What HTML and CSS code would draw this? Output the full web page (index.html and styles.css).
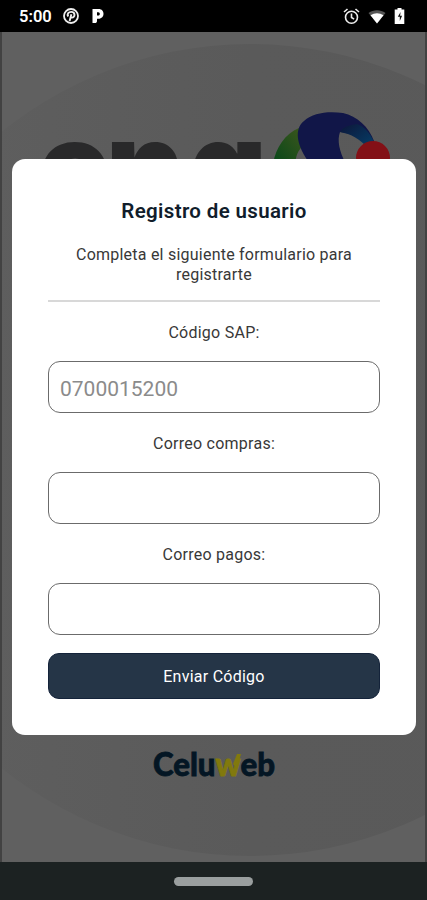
FILE: index.html
```html
<!DOCTYPE html>
<html lang="es">
	<head>
		<meta charset="UTF-8" />
		<meta name="viewport" content="width=device-width, initial-scale=1.0" />
		<title>Registro de usuario</title>
		<link rel="stylesheet" href="styles.css">
	</head>
	<body>
		<header class="status">
			<div class="status-group">
				<span class="clock">5:00</span>
				<svg class="pin" width="16" height="16" viewBox="0 0 16 16">
					<circle cx="8" cy="8" r="7" fill="none" stroke="#eee" stroke-width="1.8" />
					<path d="M5.200 8.500C3.800 5.800 5.600 3.900 8.200 3.900c4.400 0 4.100 5.700.7 5.700-.8 0-1.200-.5-1.300-.9M8.400 6.200 6.600 13" fill="none" stroke="#eee" stroke-width="1.900" />
				</svg>
				<svg width="12" height="16" viewBox="0 0 12 16">
					<path fill="#fff" fill-rule="evenodd" d="M1 1h5.500C10 1 11.500 3.200 11.500 5.800S9.800 10.800 6.500 10.800H5V13c0 1.500-1 2-2 2H.5V1zM5 4.200v3.400h1.300c2 0 2-3.400 0-3.400z" />
				</svg>
			</div>
			<div class="status-group right">
				<svg width="17" height="17" viewBox="0 0 17 17" fill="none" stroke="#eee" stroke-width="1.600">
					<circle cx="8.500" cy="9.200" r="6" />
					<path d="M8.500 5.500v4l2.600 1.700M1 4l3.500-3M16 4l-3.500-3" />
				</svg>
				<svg width="18" height="15" viewBox="0 0 18 15">
					<path d="M.5 4C5.500.2 12.500.2 17.500 4L9 14.500z" fill="#555" />
					<path d="M2.500 6.300c4-2.700 9-2.700 13 0L9 14.500z" fill="#fff" />
				</svg>
				<svg width="11" height="16" viewBox="0 0 11 16">
					<path d="M3.500 0h4v1.500h2.800V16H.7V1.500h2.800z" fill="#fff" />
					<path d="M6.600 4 3.800 8.800h2V13l2.300-5.200h-2z" fill="#111" />
				</svg>
			</div>
		</header>

		<main class="screen">
			<!-- Dimmed login screen behind the dialog -->
			<svg class="backdrop" width="427" height="830" viewBox="0 32 427 830">
				<defs>
					<linearGradient id="shade" x1="0" y1="0" x2="1" y2="0">
						<stop offset="0" stop-color="#606060" />
						<stop offset="0.5" stop-color="#5a5a5a" />
						<stop offset="1" stop-color="#595959" />
					</linearGradient>
					<linearGradient id="green" x1="0" y1="1" x2="1" y2="0">
						<stop offset="0" stop-color="#064719" />
						<stop offset="1" stop-color="#3d571d" />
					</linearGradient>
					<linearGradient id="blue" x1="0" y1="0" x2="1" y2="1">
						<stop offset="0" stop-color="#0d1638" />
						<stop offset="1" stop-color="#05406a" />
					</linearGradient>
				</defs>
				<rect y="32" width="427" height="830" fill="#606060" />
				<ellipse cx="250" cy="450" rx="400" ry="406" fill="url(#shade)" />
				<text class="brand" y="208">
					<tspan x="38">e</tspan><tspan x="106">n</tspan><tspan x="189">g</tspan>
				</text>
				<path d="M273 164c3-17 12-30 26-36l4 18c-5 4-7 10-8 18z" fill="url(#green)" />
				<path d="M310 164c-14-19-16-35-6-43 9-8 23-10 39-8 14 3 26 14 31 28l-5 6c-9-9-18-14-29-15-3 8-1 19 6 32z" fill="#111648" />
				<path d="M340 132c3-5 9-7 17-8 8 3 13 9 17 18l-5 7c-9-10-18-15-29-17z" fill="url(#blue)" />
				<circle cx="373" cy="158" r="17" fill="#831016" />
				<text class="celuweb" x="153" y="776" textLength="122" lengthAdjust="spacingAndGlyphs">Celu<tspan class="w">w</tspan>eb</text>
				<path d="M233 764l4-10h4l-4 15z" fill="#81790d" />
				<path d="M1 32v830M426 32v830" stroke="#424242" stroke-width="2" />
			</svg>

			<form class="dialog">
				<h1>Registro de usuario</h1>
				<p class="intro">Completa el siguiente formulario para registrarte</p>
				<hr />
				<label for="sap">Código SAP:</label>
				<input id="sap" type="text" placeholder="0700015200" />
				<label for="compras">Correo compras:</label>
				<input id="compras" type="text" />
				<label for="pagos">Correo pagos:</label>
				<input id="pagos" type="text" />
				<button type="button">Enviar Código</button>
			</form>
		</main>

		<footer class="nav">
			<div class="handle"></div>
		</footer>
	</body>
</html>
```
FILE: styles.css
```css
* {
	box-sizing: border-box;
}

body {
	display: flex;
	flex-direction: column;
	height: 900px;
	margin: 0;
	background: #000;
	font-family: Roboto, sans-serif;
	overflow: hidden;
}

.status {
	display: flex;
	justify-content: space-between;
	height: 32px;
	padding: 0 22px 0 19px;
	color: #fff;
}

.status-group {
	display: flex;
	align-items: center;
	gap: 13px;
}

.status-group.right {
	gap: 8px;
}

.clock {
	width: 32px;
	font-size: 16.5px;
	font-weight: 600;
	padding-top: 1px;
}

.pin {
	margin-left: -1px;
}

.screen {
	position: relative;
	height: 830px;
	padding: 127px 11px 0 12px;
}

.backdrop {
	position: absolute;
	top: 0;
	left: 0;
}

.brand {
	fill: #29292a;
	font-family: Inter, sans-serif;
	font-size: 120px;
	font-weight: 900;
}

.celuweb {
	fill: #041624;
	stroke: #041624;
	stroke-width: 0.8px;
	font-family: Lato, sans-serif;
	font-size: 32px;
	font-weight: 900;
}

.celuweb .w {
	fill: #81790d;
	stroke: #81790d;
}

.dialog {
	position: relative;
	display: flex;
	flex-direction: column;
	height: 576px;
	padding: 38px 36px 36px;
	background: #fff;
	border-radius: 13px;
	color: #383838;
	text-align: center;
}

h1 {
	margin: 0;
	color: #111d2b;
	font-size: 20.5px;
	font-weight: 600;
	letter-spacing: 0.35px;
	line-height: 28px;
}

.intro {
	margin: 20px 0 16px;
	font-size: 16px;
	letter-spacing: 0.23px;
	line-height: 19.5px;
}

hr {
	width: 100%;
	height: 2px;
	margin: 0 0 21px;
	background: #d8d8d8;
	border: none;
}

label {
	height: 20px;
	font-size: 16px;
	letter-spacing: 0.25px;
	line-height: 20px;
}

input {
	height: 52px;
	margin: 18px 0 21px;
	padding: 3px 11px 0;
	background: #fff;
	border: 1px solid #6b6b6b;
	border-radius: 12px;
	font-family: inherit;
	font-size: 21px;
}

input::placeholder {
	color: #8b8b8b;
}

button {
	height: 46px;
	margin-top: -3px;
	background: #253547;
	border: 1px solid #14233a;
	border-radius: 11px;
	color: #fff;
	font-family: inherit;
	font-size: 16px;
	letter-spacing: 0.25px;
}

.nav {
	display: flex;
	justify-content: center;
	height: 38px;
	padding-top: 15px;
	background: #1c2222;
}

.handle {
	width: 79px;
	height: 9px;
	background: #9a9f9f;
	border-radius: 5px;
}
```
